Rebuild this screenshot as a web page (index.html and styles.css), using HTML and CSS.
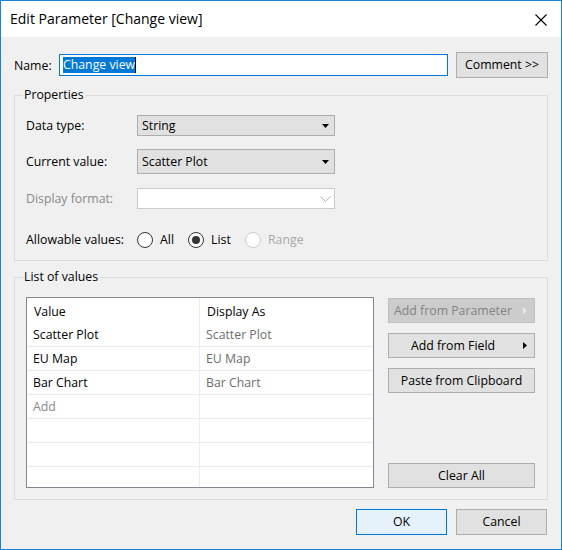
FILE: index.html
```html
<!DOCTYPE html>
<html>
<head>
<meta charset="utf-8">
<link rel="stylesheet" href="styles.css">
</head>
<body>
<div class="window">
  <div class="titlebar">
    <span class="title">Edit Parameter [Change view]</span>
    <svg class="close" width="12" height="12" viewBox="0 0 12 12"><path d="M0.5 0.5 L11.5 11.5 M11.5 0.5 L0.5 11.5" stroke="#000" stroke-width="1.1" fill="none"/></svg>
  </div>
  <div class="content">
    <div class="name-row">
      <span class="name-label">Name:</span>
      <div class="name-input"><span class="sel">Change view</span><span class="caret"></span></div>
      <button class="btn comment">Comment &gt;&gt;</button>
    </div>

    <fieldset class="group props">
      <legend>Properties</legend>
      <div class="prop-row">
        <span class="prop-label">Data type:</span>
        <div class="combo"><span>String</span><svg width="7" height="4" viewBox="0 0 7 4"><path d="M0 0 H7 L3.5 4 Z" fill="#000"/></svg></div>
      </div>
      <div class="prop-row gap14a">
        <span class="prop-label">Current value:</span>
        <div class="combo tall"><span>Scatter Plot</span><svg width="7" height="4" viewBox="0 0 7 4"><path d="M0 0 H7 L3.5 4 Z" fill="#000"/></svg></div>
      </div>
      <div class="prop-row gap14b">
        <span class="prop-label disabled">Display format:</span>
        <div class="combo off"><span></span><svg width="11" height="6" viewBox="0 0 11 6"><path d="M0.5 0.5 L5.5 5.5 L10.5 0.5" stroke="#b4b4b4" fill="none"/></svg></div>
      </div>
      <div class="prop-row gap23">
        <span class="prop-label">Allowable values:</span>
        <div class="radios">
          <span class="radio-item w-all"><span class="radio"></span><span>All</span></span>
          <span class="radio-item w-list"><span class="radio on"></span><span>List</span></span>
          <span class="radio-item off"><span class="radio"></span><span>Range</span></span>
        </div>
      </div>
    </fieldset>

    <fieldset class="group list">
      <legend>List of values</legend>
      <div class="list-body">
        <div class="values">
          <div class="cell head c1">Value</div><div class="cell head">Display As</div>
          <div class="cell c1">Scatter Plot</div><div class="cell muted">Scatter Plot</div>
          <div class="cell c1">EU Map</div><div class="cell muted">EU Map</div>
          <div class="cell c1">Bar Chart</div><div class="cell muted">Bar Chart</div>
          <div class="cell c1 add">Add</div><div class="cell"></div>
          <div class="cell c1"></div><div class="cell"></div>
          <div class="cell c1"></div><div class="cell"></div>
          <div class="cell c1"></div><div class="cell"></div>
        </div>
        <div class="side">
          <button class="btn side-btn arrow-btn dis">Add from Parameter<svg class="tri" width="4" height="7" viewBox="0 0 4 7"><path d="M0 0 L4 3.5 L0 7 Z" fill="#e8e8e8"/></svg></button>
          <button class="btn side-btn arrow-btn">Add from Field<svg class="tri" width="4" height="7" viewBox="0 0 4 7"><path d="M0 0 L4 3.5 L0 7 Z" fill="#000"/></svg></button>
          <button class="btn side-btn">Paste from Clipboard</button>
          <button class="btn side-btn clear">Clear All</button>
        </div>
      </div>
    </fieldset>

    <div class="footer">
      <button class="btn foot ok">OK</button>
      <button class="btn foot">Cancel</button>
    </div>
  </div>
</div>
</body>
</html>
```

FILE: styles.css
```css
* { box-sizing: border-box; }
html, body { margin: 0; padding: 0; }
body {
  font-family: "Open Sans", "Noto Sans", sans-serif;
  font-size: 12.3px;
  color: #000;
  background: #fff;
}
.window {
  width: 562px;
  height: 550px;
  border: 1px solid #1883d7;
  display: flex;
  flex-direction: column;
  background: #f0f0f0;
}
.titlebar {
  height: 36px;
  flex: none;
  background: #fff;
  display: flex;
  align-items: center;
  justify-content: space-between;
  padding: 0 14px 0 9px;
}
.title { font-size: 14px; line-height: 36px; }
.close { display: block; margin-top: 2px; }

.content {
  flex: 1;
  display: flex;
  flex-direction: column;
  padding: 15px 13px 0 13px;
}
.name-row { display: flex; align-items: center; height: 26px; }
.name-label { width: 45px; line-height: 16px; margin-top: 1px; }
.name-input {
  width: 389px;
  height: 22px;
  border: 1px solid #0078d7;
  background: #fff;
  padding: 0 3px;
  display: flex;
  align-items: center;
}
.sel { background: #0078d7; color: #fff; line-height: 16px; }
.caret { width: 1px; height: 16px; background: #000; }

.btn {
  font: inherit;
  color: #000;
  background: #e1e1e1;
  border: 1px solid #adadad;
  padding: 0;
  margin: 0;
  height: 26px;
  line-height: 16px;
  white-space: nowrap;
}
.comment { margin-left: auto; width: 92px; }

.group {
  margin: 0;
  min-width: 0;
  border: 1px solid #dcdcdc;
}
.group legend {
  padding: 0 1px;
  margin-left: -3px;
  line-height: 16px;
}
.props { margin-top: 9px; padding: 12px 11px 12px 11px; }

.prop-row { display: flex; align-items: center; }
.gap14a { margin-top: 13px; }
.gap14b { margin-top: 14px; }
.gap23 { margin-top: 23px; }
.prop-label { width: 111px; line-height: 16px; }
.prop-label.disabled { color: #8a8a8a; }
.combo {
  width: 198px;
  height: 21px;
  border: 1px solid #adadad;
  background: #e1e1e1;
  display: flex;
  align-items: center;
  justify-content: space-between;
  padding: 0 5px 0 4px;
  line-height: 16px;
}
.combo svg { display: block; }
.combo.tall { height: 25px; }
.combo.off { background: #fff; border-color: #cccccc; padding-right: 3px; }

.radios { display: flex; align-items: center; height: 16px; }
.radio-item { display: flex; align-items: center; gap: 7px; line-height: 16px; }
.w-all { width: 51px; }
.w-list { width: 57px; }
.radio {
  width: 16px;
  height: 16px;
  border: 1px solid #333;
  border-radius: 50%;
  background: #fff;
  display: flex;
  align-items: center;
  justify-content: center;
}
.radio.on::after {
  content: "";
  width: 8px;
  height: 8px;
  border-radius: 50%;
  background: #333;
}
.radio-item.off { color: #a8a8a8; }
.radio-item.off .radio { border-color: #cccccc; }

.list { margin-top: 8px; padding: 12px 12px 11px 11px; }
.list-body { display: flex; justify-content: space-between; }
.values {
  width: 348px;
  height: 191px;
  border: 1px solid #828790;
  background: #fff;
  overflow: hidden;
  display: grid;
  grid-template-columns: 173px 1fr;
  grid-auto-rows: 24px;
  grid-template-rows: 25px;
}
.cell {
  border-bottom: 1px solid #ebebeb;
  padding: 1px 0 0 6px;
  line-height: 22px;
  white-space: nowrap;
}
.cell.c1 { border-right: 1px solid #ebebeb; }
.cell.head { border-bottom: none; padding: 2px 0 0 7px; line-height: 23px; }
.muted { color: #6d6d6d; }
.add { color: #8a8a8a; }

.side {
  width: 147px;
  display: flex;
  flex-direction: column;
  gap: 10px;
  padding-top: 1px;
}
.side-btn { height: 25px; width: 147px; }
.arrow-btn {
  position: relative;
  padding-right: 17px;
}
.tri { position: absolute; right: 7px; top: 8px; display: block; }
.dis { background: #cccccc; border-color: #bfbfbf; color: #838383; }
.clear { margin-top: auto; }

.footer {
  display: flex;
  justify-content: flex-end;
  gap: 9px;
  margin-top: 9px;
  padding-right: 1px;
}
.foot { width: 91px; height: 26px; }
.ok { background: #e5f1fb; border-color: #0078d7; }
```
